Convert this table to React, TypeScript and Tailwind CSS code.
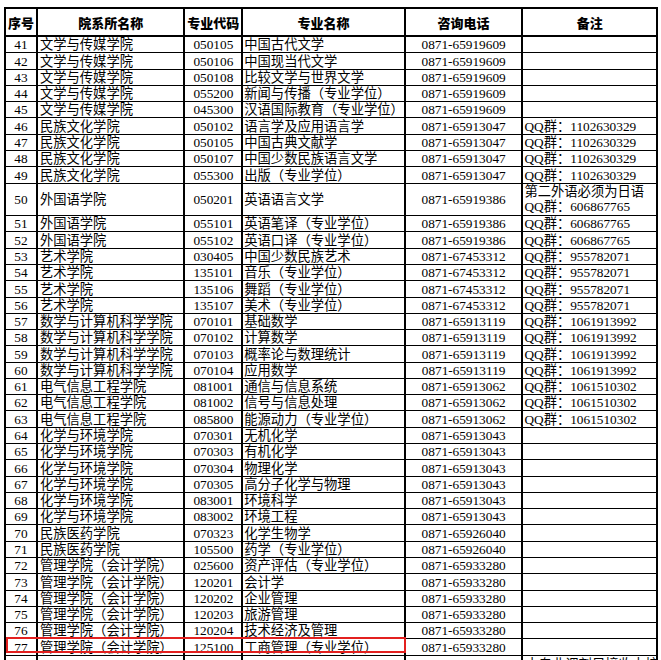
import React from "react";

type Row = [string, string, string, string, string, string[]];

const M = "管理学院（会计学院）";
const H = "化学与环境学院";
const S = "数学与计算机科学学院";
const D = "电气信息工程学院";
const W = "文学与传媒学院";
const N = "民族文化学院";
const A = "艺术学院";
const F = "外国语学院";

const rows: Row[] = [
  ["41", W, "050105", "中国古代文学", "0871-65919609", []],
  ["42", W, "050106", "中国现当代文学", "0871-65919609", []],
  ["43", W, "050108", "比较文学与世界文学", "0871-65919609", []],
  ["44", W, "055200", "新闻与传播（专业学位）", "0871-65919609", []],
  ["45", W, "045300", "汉语国际教育（专业学位）", "0871-65919609", []],
  ["46", N, "050102", "语言学及应用语言学", "0871-65913047", ["QQ群：1102630329"]],
  ["47", N, "050105", "中国古典文献学", "0871-65913047", ["QQ群：1102630329"]],
  ["48", N, "050107", "中国少数民族语言文学", "0871-65913047", ["QQ群：1102630329"]],
  ["49", N, "055300", "出版（专业学位）", "0871-65913047", ["QQ群：1102630329"]],
  ["50", F, "050201", "英语语言文学", "0871-65919386", ["第二外语必须为日语", "QQ群：606867765"]],
  ["51", F, "055101", "英语笔译（专业学位）", "0871-65919386", ["QQ群：606867765"]],
  ["52", F, "055102", "英语口译（专业学位）", "0871-65919386", ["QQ群：606867765"]],
  ["53", A, "030405", "中国少数民族艺术", "0871-67453312", ["QQ群：955782071"]],
  ["54", A, "135101", "音乐（专业学位）", "0871-67453312", ["QQ群：955782071"]],
  ["55", A, "135106", "舞蹈（专业学位）", "0871-67453312", ["QQ群：955782071"]],
  ["56", A, "135107", "美术（专业学位）", "0871-67453312", ["QQ群：955782071"]],
  ["57", S, "070101", "基础数学", "0871-65913119", ["QQ群：1061913992"]],
  ["58", S, "070102", "计算数学", "0871-65913119", ["QQ群：1061913992"]],
  ["59", S, "070103", "概率论与数理统计", "0871-65913119", ["QQ群：1061913992"]],
  ["60", S, "070104", "应用数学", "0871-65913119", ["QQ群：1061913992"]],
  ["61", D, "081001", "通信与信息系统", "0871-65913062", ["QQ群：1061510302"]],
  ["62", D, "081002", "信号与信息处理", "0871-65913062", ["QQ群：1061510302"]],
  ["63", D, "085800", "能源动力（专业学位）", "0871-65913062", ["QQ群：1061510302"]],
  ["64", H, "070301", "无机化学", "0871-65913043", []],
  ["65", H, "070303", "有机化学", "0871-65913043", []],
  ["66", H, "070304", "物理化学", "0871-65913043", []],
  ["67", H, "070305", "高分子化学与物理", "0871-65913043", []],
  ["68", H, "083001", "环境科学", "0871-65913043", []],
  ["69", H, "083002", "环境工程", "0871-65913043", []],
  ["70", "民族医药学院", "070323", "化学生物学", "0871-65926040", []],
  ["71", "民族医药学院", "105500", "药学（专业学位）", "0871-65926040", []],
  ["72", M, "025600", "资产评估（专业学位）", "0871-65933280", []],
  ["73", M, "120201", "会计学", "0871-65933280", []],
  ["74", M, "120202", "企业管理", "0871-65933280", []],
  ["75", M, "120203", "旅游管理", "0871-65933280", []],
  ["76", M, "120204", "技术经济及管理", "0871-65933280", []],
  ["77", M, "125100", "工商管理（专业学位）", "0871-65933280", []],
];

const font = { fontFamily: '"Liberation Serif", "Noto Sans CJK SC", serif' };

function DataRow({ r }: { r: Row }) {
  const tall = r[5].length > 1;
  const h = tall ? "h-[32.58px]" : "h-[16.29px]";
  const al = tall ? "items-center" : "items-end";
  return (
    <div className={`flex ${h} border-b border-black`}>
      <div className={`flex ${al} justify-center w-[32px] border-r-2 border-black`}>{r[0]}</div>
      <div className={`flex ${al} w-[148px] pl-[2px] border-r-2 border-black whitespace-nowrap overflow-hidden`}>{r[1]}</div>
      <div className={`flex ${al} justify-center w-[58px] border-r-2 border-black`}>{r[2]}</div>
      <div className={`flex ${al} w-[163px] pl-[1px] border-r-2 border-black whitespace-nowrap overflow-hidden`}>{r[3]}</div>
      <div className={`flex ${al} justify-center w-[118px] border-r-2 border-black`}>{r[4]}</div>
      <div className={`flex ${tall ? "flex-col justify-center" : "items-end"} w-[133px] pl-[1px] whitespace-nowrap overflow-hidden`}>
        {r[5].map((t, i) => (
          <div key={i} className={tall ? "leading-[15px]" : ""}>{t}</div>
        ))}
      </div>
    </div>
  );
}

export default function App() {
  return (
    <div className="relative w-[661px] h-[660px] overflow-hidden bg-white text-black" style={font}>
      <div className="ml-[4px] mt-[7px] w-[654px] border-t-2 border-x-2 border-black text-[13.3px] leading-[15px]">
        <div
          className="flex h-[28px] border-b-2 border-black font-black text-[13px]"
          style={{ fontFamily: '"Noto Sans CJK SC", sans-serif' }}
        >
          <div className="flex items-center justify-center w-[32px] border-r-2 border-black">序号</div>
          <div className="flex items-center justify-center w-[148px] border-r-2 border-black">院系所名称</div>
          <div className="flex items-center justify-center w-[58px] border-r-2 border-black">专业代码</div>
          <div className="flex items-center justify-center w-[163px] border-r-2 border-black">专业名称</div>
          <div className="flex items-center justify-center w-[118px] border-r-2 border-black">咨询电话</div>
          <div className="flex items-center justify-center w-[133px]">备注</div>
        </div>
        {rows.map((r) => (
          <DataRow key={r[0]} r={r} />
        ))}
        <div className="flex h-[16.29px]">
          <div className="w-[32px] border-r-2 border-black"></div>
          <div className="w-[148px] border-r-2 border-black"></div>
          <div className="w-[58px] border-r-2 border-black"></div>
          <div className="w-[163px] border-r-2 border-black"></div>
          <div className="w-[118px] border-r-2 border-black"></div>
          <div className="w-[133px] pl-[2px] pt-[1px] whitespace-nowrap overflow-hidden">本专业调剂只接收本校</div>
        </div>
      </div>
      <div className="absolute left-[6px] top-[637px] w-[400px] h-[16px] border-2 border-[#e3201f]"></div>
    </div>
  );
}
